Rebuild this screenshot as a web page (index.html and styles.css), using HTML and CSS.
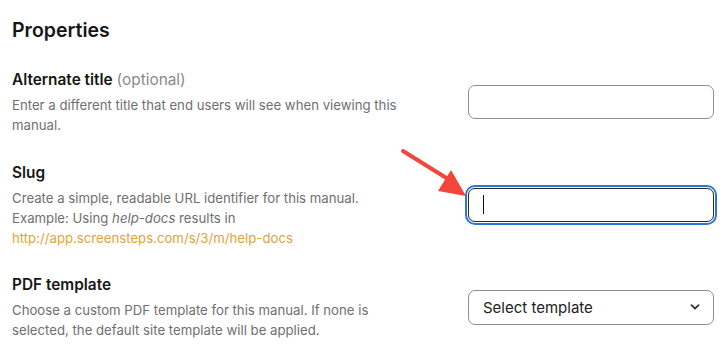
FILE: index.html
```html
<!DOCTYPE html>
<html lang="en">
<head>
  <meta charset="UTF-8">
  <meta name="viewport" content="width=device-width, initial-scale=1.0">
  <title>Manual properties</title>
  <link rel="stylesheet" href="styles.css">
</head>

<body>
  <div class="wrapper">
    <h2>Properties</h2>

    <div class="field">
      <div class="info">
        <label>Alternate title <span class="optional">(optional)</span></label>
        <p>Enter a different title that end users will see when viewing this manual.</p>
      </div>
      <div class="control">
        <div class="text-input"></div>
      </div>
    </div>

    <div class="field">
      <div class="info">
        <label>Slug</label>
        <p>Create a simple, readable URL identifier for this manual.<br>
          Example: Using <em>help-docs</em> results in<br>
          <span class="url">http://app.screensteps.com/s/3/m/help-docs</span></p>
      </div>
      <div class="control">
        <div class="text-input focused"><span class="caret"></span></div>
      </div>
    </div>

    <div class="field">
      <div class="info">
        <label>PDF template</label>
        <p>Choose a custom PDF template for this manual. If none is selected, the default site template will be applied.</p>
      </div>
      <div class="control">
        <div class="select">
          <span>Select template</span>
          <svg width="10" height="6" viewBox="0 0 10 6"><path d="M1.5 1.2 5 4.6 8.5 1.2" fill="none" stroke="#333" stroke-width="1.8" stroke-linecap="round" stroke-linejoin="round"/></svg>
        </div>
      </div>
    </div>

    <svg class="arrow" width="80" height="50" viewBox="0 0 80 50">
      <line x1="3" y1="3" x2="48" y2="31" stroke="#f1463b" stroke-width="4" stroke-linecap="round"/>
      <polygon points="66,48 38,43 51,22" fill="#f1463b"/>
    </svg>
  </div>
</body>
</html>
```

FILE: styles.css
```css
* {
  margin: 0;
  padding: 0;
  box-sizing: border-box;
  font-family: "Inter", "Noto Sans", sans-serif;
}

body {
  width: 100%;
  height: 100vh;
  overflow: hidden;
  background: #fff;
  color: #1b1b1b;
}

.wrapper {
  position: relative;
  padding: 16px 12px 0 12px;
}

.wrapper h2 {
  font-size: 19.5px;
  line-height: 28px;
  font-weight: 600;
  color: #161616;
  margin-bottom: 25px;
}

.field {
  display: grid;
  grid-template-columns: 1fr 246px;
  column-gap: 40px;
  align-items: center;
  margin-bottom: 26.5px;
}

.info label {
  display: block;
  font-size: 15.4px;
  line-height: 22px;
  font-weight: 600;
  color: #161616;
  margin-bottom: 4px;
}

.info .optional {
  font-weight: 400;
  color: #8a8a8a;
}

.info p {
  max-width: 400px;
  font-size: 13.2px;
  line-height: 20px;
  color: #6f6f6f;
}

.info em {
  font-style: italic;
}

.info .url {
  color: #e5a23b;
}

.text-input {
  height: 34px;
  border: 1px solid #8e8e8e;
  border-radius: 7px;
  display: flex;
  align-items: center;
  padding: 0 14px;
}

.text-input.focused {
  border: 1.5px solid #2a2a2a;
  box-shadow: 0 0 0 1px #fff, 0 0 0 3px #2b78d4;
}

.caret {
  width: 1px;
  height: 19px;
  background: #111;
}

.select {
  height: 35px;
  border: 1px solid #8e8e8e;
  border-radius: 7px;
  display: flex;
  align-items: center;
  justify-content: space-between;
  padding: 0 13px 0 14px;
  font-size: 15px;
  color: #222;
}

.arrow {
  position: absolute;
  left: 400px;
  top: 148px;
}
```
